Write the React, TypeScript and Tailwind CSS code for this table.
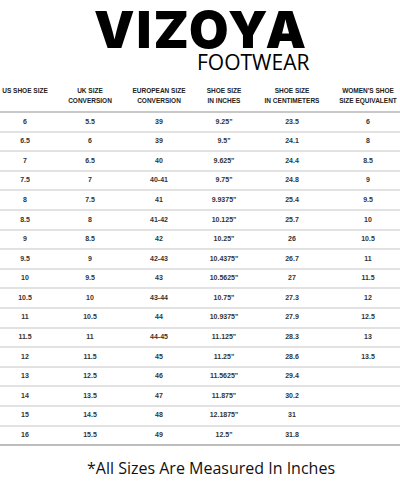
import React from 'react';

// size chart rows: us, uk, eu, inches, cm, women's
const rows: string[][] = [
  ['6', '5.5', '39', '9.25"', '23.5', '6'],
  ['6.5', '6', '39', '9.5"', '24.1', '8'],
  ['7', '6.5', '40', '9.625"', '24.4', '8.5'],
  ['7.5', '7', '40-41', '9.75"', '24.8', '9'],
  ['8', '7.5', '41', '9.9375"', '25.4', '9.5'],
  ['8.5', '8', '41-42', '10.125"', '25.7', '10'],
  ['9', '8.5', '42', '10.25"', '26', '10.5'],
  ['9.5', '9', '42-43', '10.4375"', '26.7', '11'],
  ['10', '9.5', '43', '10.5625"', '27', '11.5'],
  ['10.5', '10', '43-44', '10.75"', '27.3', '12'],
  ['11', '10.5', '44', '10.9375"', '27.9', '12.5'],
  ['11.5', '11', '44-45', '11.125"', '28.3', '13'],
  ['12', '11.5', '45', '11.25"', '28.6', '13.5'],
  ['13', '12.5', '46', '11.5625"', '29.4', ''],
  ['14', '13.5', '47', '11.875"', '30.2', ''],
  ['15', '14.5', '48', '12.1875"', '31', ''],
  ['16', '15.5', '49', '12.5"', '31.8', ''],
];

const headers: string[][] = [
  ['US SHOE SIZE'],
  ['UK SIZE', 'CONVERSION'],
  ['EUROPEAN SIZE', 'CONVERSION'],
  ['SHOE SIZE', 'IN INCHES'],
  ['SHOE SIZE', 'IN CENTIMETERS'],
  ["WOMEN'S SHOE", 'SIZE EQUIVALENT'],
];

const grid = 'grid grid-cols-[50px_80px_58px_72px_64px_76px]';

export default function App() {
  return (
    <div className="w-[400px] h-[500px] bg-white overflow-hidden font-['Liberation_Sans',sans-serif] text-[#333]">
      {/* Brand */}
      <header className="pt-[10px] select-none">
        <div className="flex justify-center pl-[2px]">
          <h1 className="font-['Inter',sans-serif] font-black text-[51px] leading-[40px] tracking-[2px] text-black">
            VIZOYA
          </h1>
        </div>
        <div className="pl-[197px] mt-[2px] font-['Open_Sans',sans-serif] text-[21px] leading-[20px] text-black">
          FOOTWEAR
        </div>
      </header>

      {/* Size table */}
      <section className="mt-[14px]">
        <div className={`${grid} h-[27px] border-b-2 border-[#c8c8c8] text-[6.5px] leading-[10px] font-bold text-[#222]`}>
          {headers.map((h, i) => (
            <div key={i} className={`flex flex-col items-center ${i === 5 ? 'pl-3' : ''}`}>
              {h.map((line) => (
                <span key={line}>{line}</span>
              ))}
            </div>
          ))}
        </div>

        {rows.map((r, idx) => (
          <div
            key={idx}
            className={`${grid} h-[19.6px] items-center text-[7px] font-bold border-b-2 ${
              idx === rows.length - 1 ? 'border-[#bdbdbd]' : 'border-[#e2e2e2]'
            }`}
          >
            {r.map((c, i) => (
              <span key={i} className={`text-center ${i === 5 ? 'pl-3' : ''}`}>
                {c}
              </span>
            ))}
          </div>
        ))}
      </section>

      <p className="mt-[12px] text-center pl-[22px] font-['Open_Sans',sans-serif] text-[16px] leading-[20px] text-[#111]">
        *All Sizes Are Measured In Inches
      </p>
    </div>
  );
}
